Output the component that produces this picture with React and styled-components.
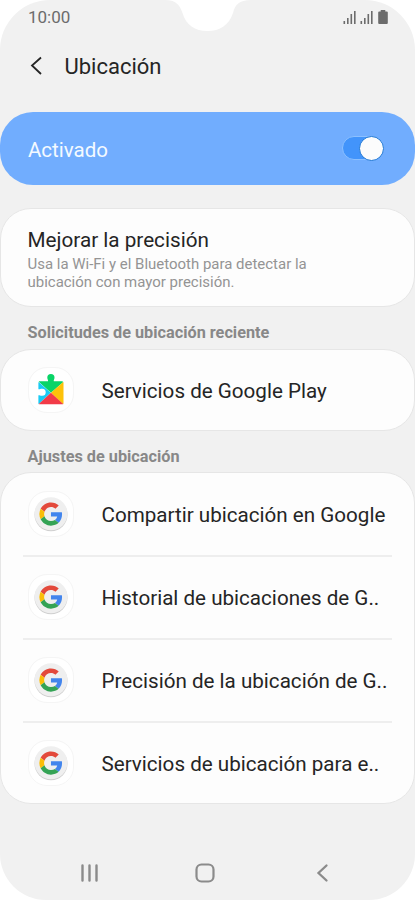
import React from 'react';
import styled, { createGlobalStyle } from 'styled-components';

const GlobalStyle = createGlobalStyle`
  * { box-sizing: border-box; }
  body { margin: 0; background: #fff; }
  h1, h2, p { margin: 0; font-weight: 400; }
`;

const Phone = styled.div`
  position: relative;
  display: flex;
  flex-direction: column;
  width: 415px;
  height: 900px;
  overflow: hidden;
  background: #f1f1f1;
  border-radius: 50px 50px 46px 46px;
  font-family: Roboto, sans-serif;
  color: #252525;
`;

const Notch = styled.svg`
  position: absolute;
  top: 0;
  left: 165px;
`;

const StatusBar = styled.header`
  display: flex;
  align-items: center;
  justify-content: space-between;
  height: 34px;
  padding: 0 26px 0 28px;
  color: #6c6c6c;
`;

const Clock = styled.span`
  font-size: 17px;
  line-height: 34px;
`;

const TitleBar = styled.div`
  display: flex;
  align-items: center;
  height: 64px;
  padding-left: 28px;
`;

const BackIcon = styled.svg`
  margin-right: 20.5px;
`;

const Title = styled.h1`
  padding-top: 2px;
  font-size: 22px;
  line-height: 28px;
`;

const Banner = styled.section`
  display: flex;
  align-items: center;
  justify-content: space-between;
  height: 73.6px;
  margin-top: 13.6px;
  padding: 0 31px 0 28px;
  border-radius: 33px;
  background: #71adfe;
  color: #f4faff;
  font-size: 20.5px;
`;

const BannerLabel = styled.span`
  padding-top: 3px;
`;

const Switch = styled.div`
  display: flex;
  align-items: center;
  justify-content: flex-end;
  width: 42px;
  height: 24px;
  border: 1px solid #8cc0ff;
  border-radius: 12px;
  background: #4294fb;
`;

const Thumb = styled.span`
  flex: none;
  width: 25px;
  height: 25px;
  margin-right: -1px;
  border: 1px solid #1f78d6;
  border-radius: 50%;
  background: #fcfcfc;
`;

const Card = styled.section`
  flex: none;
  height: ${({ $height }) => $height}px;
  margin: ${({ $gap }) => $gap || 0}px 0 0;
  padding: 0 22px;
  border: 1px solid #e6e6e6;
  border-radius: 31px;
  background: #fdfdfd;
`;

const Precision = styled.div`
  padding: 17px 0 0 4.5px;
`;

const PrecisionTitle = styled.h2`
  font-size: 20.7px;
  line-height: 28px;
`;

const Note = styled.p`
  width: 320px;
  padding-top: 0.6px;
  color: #949494;
  font-size: 14.98px;
  line-height: 18px;
`;

const SectionLabel = styled.h2`
  height: 42px;
  padding-left: 27.6px;
  color: #888;
  font-size: 16.25px;
  font-weight: 700;
  line-height: 51px;
`;

const Row = styled.div`
  display: flex;
  align-items: center;
  height: 83px;
  padding-left: 4.5px;
  white-space: nowrap;
  font-size: 20.62px;

  &:first-child { height: 82px; padding-top: 1px; }
  & + & { border-top: 2px solid #eee; }
`;

const IconTile = styled.div`
  display: flex;
  flex: none;
  align-items: center;
  justify-content: center;
  width: 46px;
  height: 46px;
  margin: 0 28px 1.5px 0;
  border: 1px solid #f5f5f5;
  border-radius: 19px;
  background: #fff;
`;

const NavBar = styled.nav`
  display: flex;
  align-items: center;
  justify-content: space-between;
  height: 54px;
  margin-top: auto;
  padding: 0 81.5px 0 77px;
`;

const Signals = () => (
  <svg width="46" height="16" viewBox="0 0 46 16" fill="#6c6c6c">
    {[0, 17].map((x) => (
      <g key={x} transform={`translate(${x} 0)`}>
        <rect x="0.5" y="12" width="1.6" height="3" />
        <rect x="4" y="9" width="1.6" height="6" />
        <rect x="7.5" y="5" width="1.6" height="10" />
        <rect x="11" y="2" width="1.6" height="13" />
      </g>
    ))}
    <path d="M35.2 3.500q0-1 1-1h1.500V1h4.600v1.500h1.500q1 0 1 1v10.500q0 1-1 1h-7.600q-1 0-1-1z" />
  </svg>
);

const PlayServicesIcon = () => (
  <svg width="28" height="34" viewBox="0 0.8 28 34">
    <path d="M2.3 9H11c.3-1.2-.7-1.7-.7-3.600a3.600 3.600 0 0 1 7.200 0c0 1.900-1 2.400-.7 3.600h8q1.200 0 1.500.8L14 20.500 1.700 9.600z" fill="#09d467" />
    <path d="M1.600 9.700 13.700 20.500 1.700 32q-.3-.3-.3-1V23c1.400-.2 1.700.7 3.800.6a3.500 3.500 0 0 0 0-7c-2.100 0-2.400.8-3.800.5v-6.300q0-.8.2-1.100z" fill="#18cbf5" />
    <path d="M26.200 9.800 14 20.500 26.100 32q.4-.4.4-1V10.800q0-.7-.3-1z" fill="#fdc20a" />
    <path d="M13.900 20.500 1.800 31.700q.4.4 1 .4h22.400q.6 0 1-.4z" fill="#f23b48" />
  </svg>
);

const GoogleIcon = () => (
  <svg width="38" height="38" viewBox="0 0 38 38">
    <circle cx="19" cy="19.8" r="16.5" fill="#cfcfcf" />
    <circle cx="19" cy="18.8" r="16.5" fill="#efefef" />
    <g transform="translate(7.4 7.5) scale(.482)">
      <path fill="#e3493b" d="M24 9.500c3.500 0 6.700 1.200 9.200 3.600l6.900-6.900C35.900 2.400 30.500 0 24 0 14.600 0 6.500 5.400 2.600 13.200l8 6.200C12.400 13.700 17.700 9.500 24 9.500z" />
      <path fill="#4285ed" d="M47 24.500c0-1.600-.2-3.100-.4-4.500H24v9h12.900c-.6 3-2.200 5.500-4.700 7.200l7.700 6C44.400 38 47 31.800 47 24.500z" />
      <path fill="#fabd08" d="M10.500 28.600a14.500 14.500 0 0 1 0-9.200l-7.900-6.200a24 24 0 0 0 0 21.600z" />
      <path fill="#34a355" d="M24 48c6.500 0 12-2.100 15.900-5.800l-7.700-6c-2.100 1.500-4.900 2.300-8.200 2.300-6.300 0-11.600-4.200-13.500-9.900l-7.900 6.200C6.500 42.600 14.600 48 24 48z" />
    </g>
  </svg>
);

const locationSettings = [
  'Compartir ubicación en Google',
  'Historial de ubicaciones de G..',
  'Precisión de la ubicación de G..',
  'Servicios de ubicación para e..',
];

export default function App() {
  return (
    <>
      <GlobalStyle />
      <Phone>
        <StatusBar>
          <Clock>10:00</Clock>
          <Signals />
        </StatusBar>
        <Notch width="86" height="32" viewBox="0 0 86 32">
          <path d="M0 0C12 0 15 6 17.500 13C21 25 30 31 42.500 31S64 25 68 13C70 5 74 0 86 0Z" fill="#fff" />
        </Notch>

        <TitleBar>
          <BackIcon width="16" height="20" viewBox="0 0 16 20" fill="none" stroke="#252525" strokeWidth="1.8">
            <path d="M13 1.500 4 9.500l9 8.500" />
          </BackIcon>
          <Title>Ubicación</Title>
        </TitleBar>

        <Banner>
          <BannerLabel>Activado</BannerLabel>
          <Switch><Thumb /></Switch>
        </Banner>

        <Card $height={98.5} $gap={23}>
          <Precision>
            <PrecisionTitle>Mejorar la precisión</PrecisionTitle>
            <Note>Usa la Wi-Fi y el Bluetooth para detectar la ubicación con mayor precisión.</Note>
          </Precision>
        </Card>

        <SectionLabel>Solicitudes de ubicación reciente</SectionLabel>
        <Card $height={82}>
          <Row>
            <IconTile><PlayServicesIcon /></IconTile>
            Servicios de Google Play
          </Row>
        </Card>

        <SectionLabel>Ajustes de ubicación</SectionLabel>
        <Card $height={332} $gap={-0.4}>
          {locationSettings.map((label) => (
            <Row key={label}>
              <IconTile><GoogleIcon /></IconTile>
              {label}
            </Row>
          ))}
        </Card>

        <NavBar>
          <svg width="24" height="24" viewBox="0 0 24 24" stroke="#8b8b8b" strokeWidth="2.4" strokeLinecap="round">
            <path d="M5.500 4.500v15M12.500 4.500v15M19.500 4.500v15" />
          </svg>
          <svg width="24" height="24" viewBox="0 0 24 24" fill="none" stroke="#8b8b8b" strokeWidth="2.2">
            <rect x="3.500" y="3.500" width="17" height="17" rx="5" />
          </svg>
          <svg width="24" height="24" viewBox="0 0 24 24" fill="none" stroke="#8b8b8b" strokeWidth="2.3" strokeLinecap="round">
            <path d="M16.500 4.500 8.500 12l8 7.500" />
          </svg>
        </NavBar>
      </Phone>
    </>
  );
}
